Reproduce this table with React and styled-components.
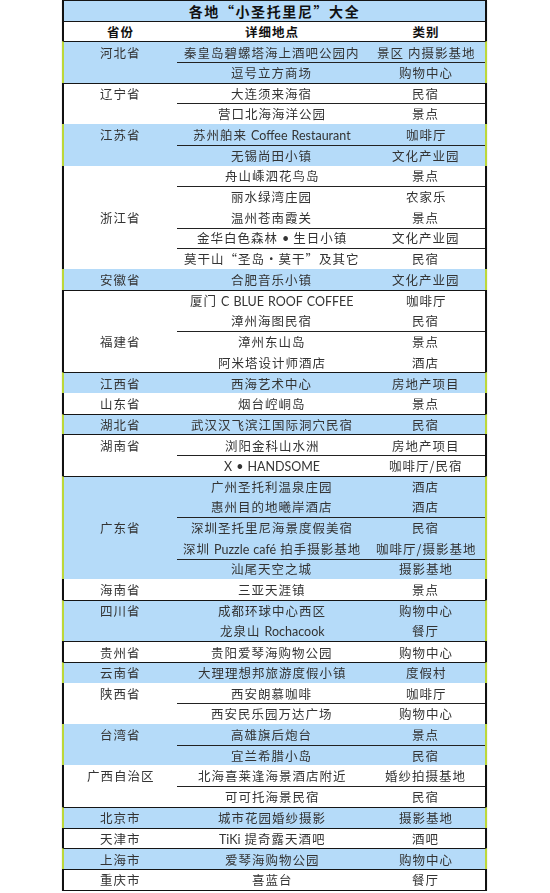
import React from "react";
import styled, { createGlobalStyle } from "styled-components";

const GlobalStyle = createGlobalStyle`
  html, body {
    margin: 0;
    padding: 0;
    background: #ffffff;
  }
  body {
    font-family: "Noto Sans CJK SC", sans-serif;
  }
`;

const BLUE = "#b5dbf9";
const LIME = "#bcd83a";

const Sheet = styled.div`
  width: 425px;
  margin-left: 62px;
  border-bottom: 1.5px solid #111;
  box-shadow: 0 1px 1px rgba(0, 0, 0, 0.25);
`;

const Row = styled.div`
  box-sizing: border-box;
  height: 20.7px;
  display: grid;
  grid-template-columns: 113px 190px 118px;
  background: ${(p) => (p.$blue ? BLUE : "#ffffff")};
  border-left: 2px solid ${(p) => (p.$blue && !p.$plain ? LIME : "#111")};
  border-right: 2px solid ${(p) => (p.$blue && !p.$plain ? LIME : "#111")};
  border-top: ${(p) => (p.$top ? "1px solid #151515" : "none")};
`;

const TitleRow = styled(Row)`
  grid-template-columns: 1fr;
`;

const Title = styled.div`
  display: flex;
  align-items: center;
  justify-content: center;
  font-family: "Noto Sans CJK SC", sans-serif;
  font-size: 14px;
  font-weight: 700;
  letter-spacing: 1.6px;
  color: #111;
`;

const Cell = styled.div`
  box-sizing: border-box;
  display: flex;
  align-items: center;
  justify-content: center;
  white-space: pre;
  font-family: "Noto Sans CJK SC", sans-serif;
  font-size: 12.5px;
  letter-spacing: 1px;
  color: ${(p) => (p.$head ? "#111" : "#333")};
  font-weight: ${(p) => (p.$head ? 700 : 400)};
  border-bottom: ${(p) => (p.$line ? "1px solid #222" : "none")};
  margin-bottom: ${(p) => (p.$line ? "-1px" : "0")};
  position: relative;
  z-index: ${(p) => (p.$line ? 1 : 0)};
`;

// grey text layer, keeps the glyphs from picking up coloured fringes
const Ink = styled.span`
  display: inline-block;
  will-change: transform;
`;

const Latin = styled.span`
  font-family: Lato, "Liberation Sans", sans-serif;
  letter-spacing: 0;
`;

const Gap = styled.span`
  display: inline-block;
  width: 4px;
`;

const groups = [
  { p: "河北省", blue: true, top: true, rows: [["秦皇岛碧螺塔海上酒吧公园内", "景区 内摄影基地", 1], ["逗号立方商场", "购物中心"]] },
  { p: "辽宁省", top: true, rows: [["大连须来海宿", "民宿", 1], ["营口北海海洋公园", "景点"]] },
  { p: "江苏省", blue: true, rows: [["苏州舶来 Coffee Restaurant", "咖啡厅", 1], ["无锡尚田小镇", "文化产业园"]] },
  {
    p: "浙江省",
    at: 2,
    rows: [
      ["舟山嵊泗花鸟岛", "景点", 1],
      ["丽水绿湾庄园", "农家乐"],
      ["温州苍南霞关", "景点", 1],
      ["金华白色森林 • 生日小镇", "文化产业园", 1],
      ["莫干山“圣岛·莫干”及其它", "民宿"],
    ],
  },
  { p: "安徽省", blue: true, rows: [["合肥音乐小镇", "文化产业园"]] },
  {
    p: "福建省",
    top: true,
    at: 2,
    rows: [
      ["厦门 C BLUE ROOF COFFEE", "咖啡厅"],
      ["漳州海图民宿", "民宿", 1],
      ["漳州东山岛", "景点"],
      ["阿米塔设计师酒店", "酒店"],
    ],
  },
  { p: "江西省", blue: true, top: true, rows: [["西海艺术中心", "房地产项目"]] },
  { p: "山东省", rows: [["烟台崆峒岛", "景点"]] },
  { p: "湖北省", blue: true, top: true, rows: [["武汉汉飞滨江国际洞穴民宿", "民宿"]] },
  { p: "湖南省", top: true, rows: [["浏阳金科山水洲", "房地产项目", 1], ["X • HANDSOME", "咖啡厅/民宿"]] },
  {
    p: "广东省",
    blue: true,
    top: true,
    at: 2,
    rows: [
      ["广州圣托利温泉庄园", "酒店"],
      ["惠州目的地曦岸酒店", "酒店", 1],
      ["深圳圣托里尼海景度假美宿", "民宿"],
      ["深圳 Puzzle café 拍手摄影基地", "咖啡厅/摄影基地", 1],
      ["汕尾天空之城", "摄影基地"],
    ],
  },
  { p: "海南省", rows: [["三亚天涯镇", "景点"]] },
  { p: "四川省", blue: true, top: true, rows: [["成都环球中心西区", "购物中心"], ["龙泉山 Rochacook", "餐厅"]] },
  { p: "贵州省", top: true, rows: [["贵阳爱琴海购物公园", "购物中心"]] },
  { p: "云南省", blue: true, top: true, rows: [["大理理想邦旅游度假小镇", "度假村"]] },
  { p: "陕西省", rows: [["西安朗慕咖啡", "咖啡厅", 1], ["西安民乐园万达广场", "购物中心"]] },
  { p: "台湾省", blue: true, rows: [["高雄旗后炮台", "景点", 1], ["宜兰希腊小岛", "民宿"]] },
  { p: "广西自治区", rows: [["北海喜莱逢海景酒店附近", "婚纱拍摄基地", 1], ["可可托海景民宿", "民宿"]] },
  { p: "北京市", blue: true, top: true, rows: [["城市花园婚纱摄影", "摄影基地"]] },
  { p: "天津市", top: true, rows: [["TiKi 提奇露天酒吧", "酒吧"]] },
  { p: "上海市", blue: true, top: true, rows: [["爱琴海购物公园", "购物中心"]] },
  { p: "重庆市", top: true, rows: [["喜蓝台", "餐厅"]] },
];

// latin words get the western font and no extra spacing, spaces become fixed gaps
const Txt = ({ s }) => (
  <Ink>
    {s.split(/( |[A-Za-zé•]+)/).map((part, i) => {
      if (part === " ") return <Gap key={i} />;
      if (/[A-Za-z•]/.test(part)) return <Latin key={i}>{part}</Latin>;
      return part;
    })}
  </Ink>
);

const App = () => {
  return (
    <>
      <GlobalStyle />
      <Sheet>
        <TitleRow $blue $plain $top>
          <Title>各地“小圣托里尼”大全</Title>
        </TitleRow>
        <Row $top>
          <Cell $head>省份</Cell>
          <Cell $head>详细地点</Cell>
          <Cell $head>类别</Cell>
        </Row>
        {groups.map((g) =>
          g.rows.map(([place, kind, line], i) => (
            <Row key={g.p + i} $blue={g.blue} $top={g.top && i === 0}>
              <Cell>{i === (g.at || 0) ? <Txt s={g.p} /> : ""}</Cell>
              <Cell $line={line}>
                <Txt s={place} />
              </Cell>
              <Cell $line={line}>
                <Txt s={kind} />
              </Cell>
            </Row>
          ))
        )}
      </Sheet>
    </>
  );
};

export default App;
